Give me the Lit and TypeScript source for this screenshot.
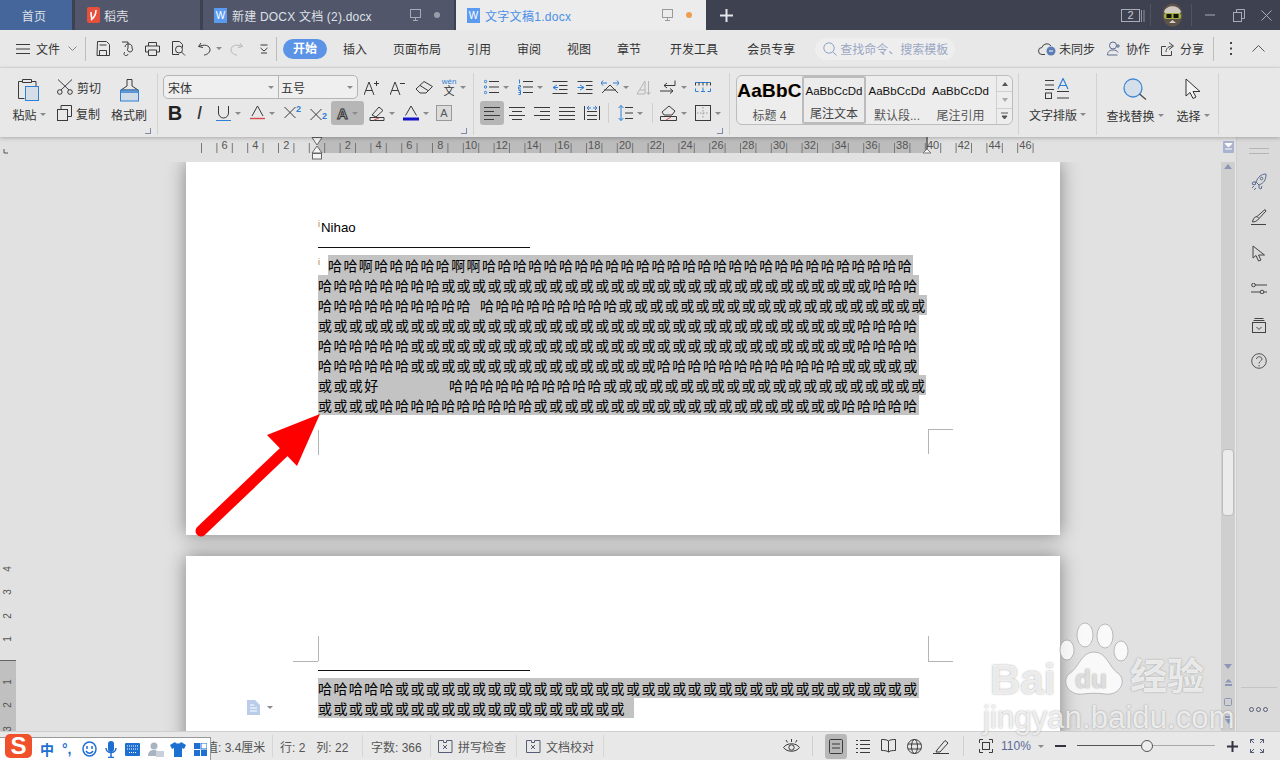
import { LitElement, html, svg, css } from "lit";
import { customElement } from "lit/decorators.js";

const I = (w: number, h: number, b: unknown, sw = 1) => html`<svg class="i" width=${w} height=${h} viewBox="0 0 ${w} ${h}" fill="none" stroke="#3a3a3a" stroke-width=${sw}>${b}</svg>`;
const BL = "#2f7fd6";
const caret = html`<i class="c"></i>`;
const T = (w: number, icon: unknown, c = false, on = false) => html`<span class="t ${on ? "on" : ""}" style="width:${w}px">${icon}${c ? caret : ""}</span>`;
const r = (s: string, n: number) => s.repeat(n);
const H = "哈", O = "或";

type Seg = string | number;
type Line = { indent?: number; segs: Seg[] };
const lines: Line[] = [
  { indent: 10, segs: ["哈哈啊哈哈哈哈哈啊啊" + r(H, 28)] },
  { segs: [r(H, 8) + r(O, 28) + r(H, 3)] },
  { segs: [r(H, 10), 8, r(H, 9) + r(O, 20)] },
  { segs: [r(O, 35) + r(H, 4)] },
  { segs: [r(H, 6) + r(O, 29) + r(H, 4)] },
  { segs: [r(H, 6) + r(O, 16) + r(H, 12) + r(O, 5)] },
  { segs: ["或或或好", 69.4, r(H, 10) + r(O, 21)] },
  { segs: [r(O, 4) + r(H, 10) + r(O, 20) + r(H, 5)] },
];
const lines2: Line[] = [{ segs: [r(H, 5) + r(O, 34)] }, { segs: [r(O, 20), 8] }];
const renderLine = (l: Line) => html`<div class="ln" style=${l.indent ? `padding-left:${l.indent}px` : ""}><span class="hl">${l.segs.map((s) => typeof s === "number" ? html`<span class="gap" style="width:${s}px"></span>` : s)}</span></div>`;

const hr = () => {
  const items: unknown[] = [];
  for (let n = -7.5; n <= 46.5; n += 1) {
    const x = 317 + 15.4 * n;
    items.push(svg`<line x1=${x} x2=${x} y1="6" y2="16" stroke="#777" stroke-width="1"/>`);
  }
  for (let n = -6; n <= 46; n += 2) {
    if (n === 0) continue;
    items.push(svg`<text x=${317 + 15.4 * n} y="12" text-anchor="middle" class="rt">${Math.abs(n)}</text>`);
  }
  return items;
};

const tabW = html`<span class="w">W</span>`;
const mon = html`<svg class="i" width="13" height="14" viewBox="0 0 13 14" fill="none" stroke="currentColor"><rect x="1.5" y="1.5" width="10" height="8"/><path d="M6.5 9.5v3M4 12.5h5"/></svg>`;

@customElement("app-root")
export class AppRoot extends LitElement {
  static styles = css`
    :host { display: block; width: 1280px; height: 760px; position: relative; overflow: hidden; font: 12px "Liberation Sans", "Noto Sans CJK SC", sans-serif; color: #333; background: #e1e1e1; }
    .root { display: flex; flex-direction: column; height: 760px; }
    .i { display: block; flex: none; }
    .title { height: 30px; background: #3d4150; display: flex; flex: none; color: #dfe1e8; }
    .tab { display: flex; align-items: center; background: #51566a; height: 30px; flex: none; box-sizing: border-box; font-size: 12px; letter-spacing: .2px; }
    .tab.home { width: 72px; background: #44669b; justify-content: center; margin-right: 3px; padding-right: 4px; }
    .tab.dk { width: 125px; margin-right: 3px; padding-left: 12px; gap: 4px; }
    .tab.doc { width: 251px; margin-right: 2px; padding-left: 11px; gap: 5px; }
    .tab.act { width: 250px; background: #ececec; color: #4a8fe7; padding-left: 11px; gap: 5px; letter-spacing: .3px; }
    .w { width: 13px; height: 15px; background: #5b9bef; color: #fff; font-size: 10px; display: flex; align-items: center; justify-content: center; flex: none; }
    .tend { margin-left: auto; display: flex; align-items: center; gap: 12px; color: #a7abb7; padding-right: 14px; }
    .tab.act .tend { color: #9a9a9a; }
    .dot { width: 6px; height: 6px; border-radius: 50%; background: #9a9da8; }
    .dot.o { background: #ee9d4e; }
    .plus { width: 40px; display: flex; justify-content: center; align-items: center; }
    .win { margin-left: auto; display: flex; align-items: center; height: 30px; }
    .num { width: 17px; height: 11px; border: 1px solid #a9adb8; color: #c9ccd4; font-size: 11px; line-height: 11px; text-align: center; }
    .vs { width: 1px; height: 22px; background: #50545f; }
    .w-bars { margin: 0 5px 0 1px; }
    .w-ava { margin: 0 7px 0 10px; }
    .w-min { margin: 0 12px 0 13px; }
    .w-max { margin: 0 13px 0 6px; }
    .w-cls { margin: 0 8px 0 3px; }
    .menu { height: 38px; flex: none; background: #e8e8e8; display: flex; align-items: center; border-bottom: 1px solid #dcdcdc; box-sizing: border-box; }
    .mbtn { display: flex; align-items: center; justify-content: center; flex: none; }
    .msep { width: 1px; height: 24px; background: #bdbdbd; flex: none; }
    .mfile { margin-left: 6px; }
    .pill { width: 44px; height: 20px; border-radius: 10px; background: #5b94e6; color: #fff; font-weight: 700; text-align: center; line-height: 20px; margin-left: 6px; margin-right: 16px; flex: none; }
    .tabs { display: flex; gap: 26px; }
    .tabs.b { gap: 29px; margin-left: 29px; }
    .search { width: 140px; height: 22px; border-radius: 11px; background: #eeeeee; margin-left: 20px; display: flex; align-items: center; gap: 3px; padding-left: 8px; box-sizing: border-box; color: #9aa6c4; flex: none; }
    .mr { margin-left: auto; display: flex; align-items: center; height: 38px; }
    .act2 { display: flex; align-items: center; gap: 3px; color: #333; }
    .act2.co { margin-left: 12px; gap: 5px; }
    .act2.sh { margin-left: 11px; gap: 6px; }
    .mr .msep { margin-left: 9px; }
    .m-dots { margin-left: 16px; }
    .m-up { margin: 0 15px 0 20px; }
    .ribbon { height: 69px; flex: none; background: #e8e8e8; display: flex; position: relative; z-index: 2; box-shadow: 0 1px 4px rgba(0,0,0,.25); }
    .g { position: relative; box-sizing: border-box; height: 62px; margin-top: 5px; flex: none; border-right: 1px solid #d2d2d2; }
    .launch { position: absolute; right: 6px; bottom: 1px; width: 5px; height: 5px; border-right: 1px solid #7f8aa8; border-bottom: 1px solid #7f8aa8; }
    .clip { width: 158px; display: flex; padding-left: 13px; }
    .big { display: flex; flex-direction: column; align-items: center; flex: none; }
    .big > svg { margin-top: 5px; }
    .big .lb { display: flex; align-items: center; height: 18px; margin-top: 3px; white-space: nowrap; }
    .lb .c { margin-left: 3px; }
    .big.pa { width: 32px; }
    .big.br { width: 36px; }
    .small { width: 54px; display: flex; flex-direction: column; gap: 10px; margin-left: 12px; padding-top: 6px; flex: none; }
    .small div { display: flex; align-items: center; gap: 4px; height: 16px; }
    .rows { display: flex; flex-direction: column; gap: 2px; padding-top: 2px; }
    .row { display: flex; height: 24px; align-items: center; }
    .font { width: 316px; padding-left: 5px; }
    .para { width: 256px; padding-left: 6px; }
    .t { display: flex; align-items: center; justify-content: center; gap: 4px; height: 24px; flex: none; border-radius: 3px; box-sizing: border-box; }
    .t.on { background: #b6b6b6; }
    .c { display: inline-block; width: 0; height: 0; border-left: 3px solid transparent; border-right: 3px solid transparent; border-top: 3px solid #8a8a8a; flex: none; }
    .combo { width: 195px; height: 24px; border: 1px solid #b4b4b4; border-radius: 5px; display: flex; box-sizing: border-box; background: #efefef; flex: none; }
    .combo span { display: flex; align-items: center; justify-content: space-between; padding: 0 4px; box-sizing: border-box; }
    .combo span:first-child { width: 115px; border-right: 1px solid #b4b4b4; }
    .combo span:last-child { flex: 1; padding-left: 2px; }
    .wen { font-size: 8px; line-height: 8px; color: ${css([BL] as unknown as TemplateStringsArray)}; text-align: center; display: block; }
    .wen span { font-size: 11px; color: #333; line-height: 10px; }
    .bb { font: 700 20px "Liberation Sans", sans-serif; color: #222; }
    .ii { font: italic 19px "Liberation Sans", sans-serif; color: #333; }
    .sx { display: flex; align-items: flex-start; gap: 0; height: 16px; }
    .sx.sub { align-items: flex-end; }
    .sx em { font: 700 9px/9px "Liberation Sans", sans-serif; color: #2f7fd6; font-style: normal; }
    .aa { font: 700 15px "Liberation Sans", sans-serif; color: #b6b6b6; -webkit-text-stroke: 1px #333; }
    .ab { width: 14px; height: 14px; border: 1px solid #999; background: #dcdcdc; font-size: 11px; line-height: 14px; text-align: center; color: #555; }
    .vsep { width: 1px; height: 20px; background: #cfcfcf; flex: none; }
    .gal { width: 289px; padding-left: 6px; }
    .gallery { width: 277px; height: 50px; margin-top: 2px; border: 1px solid #bdbdbd; border-radius: 6px; display: flex; background: #ededed; box-sizing: border-box; }
    .st { display: flex; flex-direction: column; align-items: center; justify-content: space-between; padding: 4px 0 1px; box-sizing: border-box; color: #555; flex: none; white-space: nowrap; overflow: hidden; }
    .st.sel { border: 2px solid #bcbcbc; border-radius: 2px; background: #ececec; color: #444; padding-top: 2px; }
    .st b { font: 400 11.5px "Liberation Sans", sans-serif; color: #111; height: 22px; line-height: 22px; }
    .st b.h { font-weight: 700; font-size: 19px; color: #000; letter-spacing: .2px; text-shadow: -1px 0 0 rgba(240,160,60,.35); }
    .gs { margin-left: auto; width: 15px; display: flex; flex-direction: column; border-left: 1px solid #cfcfcf; }
    .gs span { flex: 1; display: flex; align-items: center; justify-content: center; border-bottom: 1px solid #d0d0d0; }
    .gs span:last-child { border: 0; }
    .ca { width: 0; height: 0; border-left: 3px solid transparent; border-right: 3px solid transparent; }
    .ca.u { border-bottom: 4px solid #555; }
    .ca.d { border-top: 4px solid #aaa; }
    .layout { width: 78px; display: flex; justify-content: center; }
    .findg { width: 122px; display: flex; padding-left: 10px; gap: 14px; }
    .big.top > svg { margin-top: 5px; }
    .big.top .lb { margin-top: 6px; }
    .big.fd { width: 56px; }
    .big.se { width: 32px; }
    .work { flex: 1; display: flex; min-height: 0; }
    .left { width: 1236px; display: flex; flex-direction: column; flex: none; }
    .ruler { height: 25px; background: #e1e1e1; flex: none; display: block; }
    .rt { font: 11px "Liberation Sans", sans-serif; fill: #555; }
    .rt.v { font-size: 10px; }
    .mid { flex: 1; display: flex; min-height: 0; }
    .vr { width: 16px; flex: none; display: block; }
    .canvas { width: 1205px; flex: none; overflow: hidden; background: #e1e1e1; display: flex; flex-direction: column; gap: 21px; padding-left: 170px; box-sizing: border-box; }
    .page { width: 874px; background: #fff; box-shadow: 0 0 18px rgba(0,0,0,.42); flex: none; position: relative; box-sizing: border-box; padding-left: 132px; color: #000; }
    .p1 { height: 373px; padding-top: 57px; }
    .p2 { height: 300px; padding-top: 114px; }
    .nihao { font: 13.3px/18px "Liberation Sans", sans-serif; height: 18px; padding-left: 3px; position: relative; }
    .hline { width: 212px; height: 1px; background: #111; }
    .p1 .hline { margin-top: 10px; }
    .tx { margin-top: 7px; position: relative; }
    .ln { height: 20px; font: 14px/20px "Noto Sans CJK SC", sans-serif; letter-spacing: 1.4px; white-space: nowrap; position: relative; color: #000; }
    .hl { background: #c3c3c3; display: inline-block; height: 20px; }
    .gap { display: inline-block; height: 1px; }
    .cm { position: absolute; background: #b4b4b4; }
    .cm.v { width: 1px; height: 25px; }
    .cm.h { width: 25px; height: 1px; }
    .a1 { left: 132px; top: 268px; }
    .a2 { left: 742px; top: 267px; height: 26px; }
    .a3 { left: 742px; top: 267px; }
    .b1 { left: 132px; top: 80px; }
    .b2 { left: 107px; top: 105px; }
    .b3 { left: 742px; top: 80px; }
    .b4 { left: 742px; top: 105px; }
    .imark { position: absolute; left: 0; top: 0; font: 9px/10px "Liberation Sans", sans-serif; color: #b07a3a; letter-spacing: 0; }
    .tx .imark { top: 2px; z-index: 1; }
    .sb { width: 15px; flex: none; background: #cfcfcf; border-right: 1px solid #eaeaea; box-sizing: border-box; display: flex; flex-direction: column; align-items: center; position: relative; }
    .thumb { position: absolute; left: 1px; top: 287px; width: 12px; height: 67px; border-radius: 4px; background: #ebebeb; border: 1px solid #bdbdbd; box-sizing: border-box; }
    .sbb { margin-top: auto; display: flex; flex-direction: column; align-items: center; gap: 10px; padding-bottom: 6px; }
    .tri { width: 0; height: 0; border-left: 4px solid transparent; border-right: 4px solid transparent; }
    .tri.u { border-bottom: 5px solid #8d96b5; margin-top: 2px; }
    .tri.d { border-top: 5px solid #8d96b5; }
    .side { flex: 1; background: #dadada; display: flex; flex-direction: column; align-items: center; border-left: 1px solid #cfcfcf; box-sizing: border-box; position: relative; }
    .grip { width: 20px; height: 4px; border-top: 1px solid #b5b5b5; border-bottom: 1px solid #b5b5b5; margin-top: 11px; margin-bottom: 19px; flex: none; }
    .sicons { display: flex; flex-direction: column; align-items: center; }
    .sicons svg:nth-child(2) { margin-top: 18px; }
    .sicons svg:nth-child(3) { margin-top: 20px; }
    .sicons svg:nth-child(4) { margin-top: 21px; }
    .sicons svg:nth-child(5) { margin-top: 24px; }
    .sicons svg:nth-child(6) { margin-top: 20px; }
    .sfoot { margin-top: auto; width: 36px; height: 43px; border-top: 1px solid #c4c4c4; display: flex; justify-content: center; align-items: center; gap: 2px; }
    .ring { width: 3px; height: 3px; border: 1px solid #555c75; border-radius: 50%; }
    .status { height: 29px; flex: none; background: #e8e8e8; display: flex; align-items: center; border-top: 1px solid #cfcfcf; box-sizing: border-box; color: #555; position: relative; }
    .sc { display: flex; align-items: center; height: 22px; flex: none; box-sizing: border-box; border-right: 1px solid #d6d6d6; gap: 5px; white-space: nowrap; }
    .sc.s1 { width: 273px; padding-left: 206px; }
    .sc.s2 { width: 90px; padding-left: 7px; gap: 11px; }
    .sc.s3 { width: 68px; padding-left: 8px; }
    .sc.s4 { width: 86px; padding-left: 7px; }
    .sc.s5 { width: 87px; padding-left: 9px; }
    .sr { display: flex; align-items: center; margin-left: auto; height: 28px; }
    .sp { flex: none; }
    .zoomv { margin-left: 8px; color: #5a6a9a; width: 32px; flex: none; }
    .sview { width: 22px; height: 25px; background: #b8b8b8; border-radius: 3px; display: flex; align-items: center; justify-content: center; flex: none; }
    .slider { position: relative; width: 138px; height: 14px; flex: none; }
    .slider::before { content: ""; position: absolute; left: 0; right: 0; top: 6px; height: 1px; background: #aaa; }
    .slider::after { content: ""; position: absolute; left: 64px; top: 1px; width: 10px; height: 10px; border: 1px solid #555; border-radius: 50%; background: #eee; }
    .fill { position: absolute; left: 0; top: 6px; height: 1px; width: 64px; background: #555; }
    .arrow { position: absolute; left: 0; top: 0; pointer-events: none; z-index: 5; }
    .wm { position: absolute; left: 983px; top: 620px; width: 230px; height: 112px; pointer-events: none; z-index: 4; color: rgba(255,255,255,.78); text-shadow: 0 0 2px rgba(110,110,110,.65); }
    .wm span { position: absolute; white-space: nowrap; }
    .wm .bai { left: 7px; top: 39px; font: 700 42px/1 "Liberation Sans", sans-serif; }
    .wm .jy { left: 147px; top: 36px; font: 700 37px/1 "Noto Sans CJK SC", sans-serif; }
    .wm .url { left: 0; top: 82px; font: 31px/1 "Liberation Sans", sans-serif; letter-spacing: .1px; }
    .wm .du { left: 92px; top: 46px; font: 700 26px/1 "Liberation Sans", sans-serif; color: rgba(225,225,225,.95); }
    .wm svg { position: absolute; left: 76px; top: 2px; }
    .ime { position: absolute; left: 0; top: 737px; width: 211px; height: 23px; background: #fff; border-top: 1px solid #999; border-right: 1px solid #999; box-sizing: border-box; z-index: 6; display: flex; align-items: center; padding-left: 40px; color: #1d6fd1; }
    .ime .zh { font: 700 14px "Noto Sans CJK SC", sans-serif; width: 22px; }
    .slogo { position: absolute; left: 5px; top: -4px; width: 27px; height: 24px; background: #f0502a; border-radius: 5px; color: #fff; font: 900 24px/24px "Liberation Sans", sans-serif; text-align: center; }
    .imec { display: flex; align-items: center; gap: 8px; }
    .punc { font: 700 14px/10px "Liberation Sans", sans-serif; width: 12px; }
    .shirt { margin-left: -2px; }
    .doci { position: absolute; left: 61px; top: 144px; display: flex; align-items: center; gap: 7px; }
  `;

  render() {
    return html`<div class="root">
      ${this.titleBar()}
      ${this.menuBar()}
      ${this.ribbon()}
      <div class="work">
        <div class="left">
          ${this.ruler()}
          <div class="mid">
            ${this.vruler()}
            <div class="canvas">
              <div class="page p1">
                <div class="nihao"><span class="imark">i</span>Nihao</div>
                <div class="hline"></div>
                <div class="tx">
                  <span class="imark">i</span>
                  ${lines.map(renderLine)}
                </div>
                <i class="cm v a1"></i>
                <i class="cm v a2"></i>
                <i class="cm h a3"></i>
              </div>
              <div class="page p2">
                <i class="cm v b1"></i>
                <i class="cm h b2"></i>
                <i class="cm v b3"></i>
                <i class="cm h b4"></i>
                <div class="hline"></div>
                <div class="tx">${lines2.map(renderLine)}</div>
                <div class="doci">
                  <svg class="i" width="13" height="15" viewBox="0 0 13 15"><path d="M0 0h8l5 5v10H0z" fill="#b9cdea"/><path d="M3 5h4M3 8h7M3 11h7" stroke="#fff"/></svg>
                  <i class="c"></i>
                </div>
              </div>
            </div>
            <div class="sb">
              <div class="tri u"></div>
              <div class="thumb"></div>
              <div class="sbb">
                <div class="tri d"></div>
                <svg class="i" width="9" height="9" viewBox="0 0 9 9" fill="#8d96b5"><path d="M4.5 0L8 3.5H1zM1 5h7v2H1z"/></svg>
                <svg class="i" width="8" height="8" viewBox="0 0 8 8" fill="none" stroke="#8d96b5"><rect x=".5" y=".5" width="7" height="7" rx="1"/></svg>
                <svg class="i" width="9" height="9" viewBox="0 0 9 9" fill="#8d96b5"><path d="M1 0h7v2H1zM1 3h7L4.5 8z"/></svg>
              </div>
            </div>
          </div>
        </div>
        ${this.sidebar()}
      </div>
      ${this.statusBar()}
      <svg class="arrow" width="1280" height="760"><path d="M201 531L287 449" stroke="#f00" stroke-width="11" stroke-linecap="round"/><path d="M320 414L267 435L297 466Z" fill="#f00"/></svg>
      ${this.watermark()}
      ${this.ime()}
    </div>`;
  }

  titleBar() {
    return html`<div class="title">
      <div class="tab home">首页</div>
      <div class="tab dk"><svg class="i" width="13" height="16" viewBox="0 0 13 16"><rect width="13" height="16" rx="2" fill="#e9503c"/><path d="M9 3C9 7 8 10 4 13M4 5c0 3 0 5 1 7" stroke="#fff" stroke-width="1.6" fill="none"/></svg>稻壳</div>
      <div class="tab doc">${tabW}新建 DOCX 文档 (2).docx<span class="tend">${mon}<span class="dot"></span></span></div>
      <div class="tab act">${tabW}文字文稿1.docx<span class="tend">${mon}<span class="dot o"></span></span></div>
      <div class="plus"><svg class="i" width="13" height="13" viewBox="0 0 13 13" stroke="#e4e6ec" stroke-width="2"><path d="M6.500 0v13M0 6.500h13"/></svg></div>
      <div class="win">
        <span class="num">2</span>
        <svg class="i w-bars" width="4" height="13" viewBox="0 0 4 13" stroke="#8d919c"><path d="M.5 1v12M3 1v12"/></svg>
        <span class="vs"></span>
        <svg class="i w-ava" width="23" height="24" viewBox="0 0 23 24"><ellipse cx="11.500" cy="12" rx="10" ry="11.500" fill="#5d5348"/><path d="M3 9C5 2 17 1 20 9L18 11H5z" fill="#cfc9c0"/><rect x="3" y="10" width="17" height="6" rx="2.500" fill="#a4b13c"/><rect x="5.500" y="11" width="5" height="4" fill="#111"/><rect x="12.500" y="11" width="5" height="4" fill="#111"/><path d="M8 20l3.500-3 3.500 3z" fill="#d8cfc8"/></svg>
        <span class="vs"></span>
        <svg class="i w-min" width="10" height="2" viewBox="0 0 10 2" stroke="#a9adb8"><path d="M0 1h10"/></svg>
        <svg class="i w-max" width="12" height="13" viewBox="0 0 12 13" fill="none" stroke="#a9adb8"><rect x=".5" y="3.500" width="8" height="9"/><path d="M3.500 3.500v-3h8v9h-3"/></svg>
        <svg class="i w-cls" width="11" height="11" viewBox="0 0 11 11" stroke="#a9adb8"><path d="M.5.5l10 10M10.500.5l-10 10"/></svg>
      </div>
    </div>`;
  }

  menuBar() {
    const m = (w: number, b: unknown = "") => html`<span class="mbtn" style="width:${w}px">${b}</span>`;
    return html`<div class="menu">
      ${m(16)}
      ${I(14, 10, svg`<path d="M0 .5h14M0 5h14M0 9.500h14"/>`)}
      <span class="mfile">文件</span>
      ${m(25, I(9, 5, svg`<path d="M.5.500L4.500 4.500L8.500.500" stroke="#888"/>`))}
      <span class="msep"></span>
      ${m(10)}
      ${I(14, 15, svg`<path d="M1.500.500h9l3 3v11h-12.500zM3.500 14.500v-5h7v5M3.500 4h7"/>`)}
      ${m(11)}
      ${I(14, 15, svg`<path d="M1 1h6M7 1v6a2.500 2.500 0 1 0 4 0a3 3 0 1 0-7-1M4 11a2 2 0 1 0 3 2" />`)}
      ${m(10)}
      ${I(15, 14, svg`<path d="M3.500 4V.500h8V4M.500 4h14v6h-3M3.500 10h-3V4M3.500 8h8v5.500h-8z"/>`)}
      ${m(11)}
      ${I(15, 15, svg`<path d="M8 13.500H1.500V.500h7l3 3v3"/><circle cx="8" cy="8.500" r="3.500"/><path d="M10.500 11L14 14.500"/>`)}
      ${m(12)}
      ${I(13, 14, svg`<path d="M3 1L.500 4.500L5 5.500M1 4.500C6 2 12 3 12 8C12 11 8 13 6 13"/>`)}
      ${m(15, caret)}
      ${m(4)}
      ${I(13, 14, svg`<path stroke="#b8b8b8" d="M10 1l2.500 3.500L8 5.500M12 4.500C7 2 1 3 1 8C1 11 5 13 7 13"/>`)}
      ${m(17)}
      ${I(8, 10, svg`<path d="M.5 1h7M.5 4l3.500 3L7.500 4M1 9h6"/>`)}
      ${m(8)}
      <span class="msep"></span>
      <span class="pill">开始</span>
      <div class="tabs"><span>插入</span><span>页面布局</span><span>引用</span><span>审阅</span><span>视图</span><span>章节</span></div>
      <div class="tabs b"><span>开发工具</span><span>会员专享</span></div>
      <div class="search"><svg class="i" width="14" height="14" viewBox="0 0 14 14" fill="none" stroke="#8ea0c8"><circle cx="6" cy="6" r="5.200"/><path d="M10 10l3.500 3.500"/></svg>查找命令、搜索模板</div>
      <div class="mr">
        <span class="act2"><svg class="i" width="18" height="14" viewBox="0 0 18 14" fill="none" stroke="#444"><path d="M7 12.500H4a3.500 3.500 0 0 1 0-7a5 5 0 0 1 9-1.500"/><circle cx="13" cy="9" r="4.500" fill="#5e7fb5" stroke="none"/><path d="M11 9h4" stroke="#fff"/></svg>未同步</span>
        <span class="act2 co"><svg class="i" width="14" height="15" viewBox="0 0 14 15" fill="none" stroke="#5a6c92"><circle cx="6" cy="4.500" r="3.500"/><path d="M.5 14c0-4 3-5 5.500-5s4 .5 5 2.500M.5 14h10M11 3v4M9 5h4"/></svg>协作</span>
        <span class="act2 sh"><svg class="i" width="13" height="14" viewBox="0 0 13 14" fill="none" stroke="#444"><path d="M5 4.500H.5v9h10V9M8 .5l4.500 3.500L8 7.500M12 4C8 4 5 6 5 10"/></svg>分享</span>
        <span class="msep"></span>
        <svg class="i m-dots" width="2" height="13" viewBox="0 0 2 13" fill="#444"><rect width="2" height="2"/><rect y="5.500" width="2" height="2"/><rect y="11" width="2" height="2"/></svg>
        <svg class="i m-up" width="13" height="7" viewBox="0 0 13 7" fill="none" stroke="#555"><path d="M.5 6.500L6.500.500L12.500 6.500"/></svg>
      </div>
    </div>`;
  }

  ribbon() {
    return html`<div class="ribbon">
      <div class="g clip">
        <div class="big pa">
          <svg class="i" width="22" height="24" viewBox="0 0 22 24" fill="none" stroke="#3a3a3a"><path d="M4.500 3.500H.5v17h6M14 3.500h4V8M4.500 1.500h9v3h-9z"/><rect x="7.500" y="8.500" width="13" height="14" fill="#d5dee8" stroke="${BL}"/></svg>
          <span class="lb">粘贴${caret}</span>
        </div>
        <div class="small">
          <div>${I(16, 16, svg`<path d="M1 .5L12 11M15 .5L4 11"/><circle cx="2.800" cy="13" r="2.300"/><circle cx="13" cy="13" r="2.300"/>`)}剪切</div>
          <div>${I(15, 16, svg`<rect x=".5" y="4.500" width="10" height="11"/><path d="M4 4.500V.5h10.500v11h-4"/>`)}复制</div>
        </div>
        <div class="big br">
          <svg class="i" width="19" height="24" viewBox="0 0 19 24" fill="none" stroke="#3a3a3a"><path d="M7 8V1.500h5V8l6 4H1z"/><rect x=".5" y="14" width="18" height="9" fill="#cfdbe6" stroke="${BL}"/><path d="M.5 12h18v2H.5z" stroke="${BL}"/></svg>
          <span class="lb">格式刷</span>
        </div>
        <i class="launch"></i>
      </div>
      <div class="g font">
        <div class="rows">
          <div class="row">
            <div class="combo"><span>宋体${caret}</span><span>五号${caret}</span></div>
            ${T(28, I(16, 15, svg`<path d="M0 15L5 2l5 13M2 10.500h6M10 3.500h5M12.500 1v5" />`))}
            ${T(24, I(16, 15, svg`<path d="M0 15L5 2l5 13M2 10.500h6M10 3.500h5"/>`))}
            ${T(28, I(19, 14, svg`<path d="M1 9L9 1.500l8.500 5L11 13H5zM5 5.500l8 5"/>`))}
            ${T(32, html`<span class="wen">wén<br /><span>文</span></span>`, true)}
          </div>
          <div class="row">
            ${T(24, html`<span class="bb">B</span>`)}
            ${T(25, html`<span class="ii">I</span>`)}
            ${T(33, I(15, 16, svg`<path d="M2.500 1v7a5 5 0 0 0 10 0V1"/><path d="M0 15.500h15" stroke="${BL}"/>`), true)}
            ${T(34, I(15, 16, svg`<path d="M2 11L7.500 1l5.500 10"/><path d="M0 13.500h15" stroke="#d94a4a" stroke-width="1.400"/>`), true)}
            ${T(27, html`<span class="sx">${I(12, 14, svg`<path d="M.5 2l11 11M11.500 2L.5 13"/>`)}<em>2</em></span>`)}
            ${T(25, html`<span class="sx sub">${I(12, 13, svg`<path d="M.5 1l11 11M11.500 1L.5 12"/>`)}<em>2</em></span>`)}
            ${T(33, html`<span class="aa">A</span>`, true, true)}
            ${T(35, I(16, 16, svg`<path d="M3 10L10 2l4 3.500L7 12zM1 12.500h14v3H1z"/><path d="M5 15l5-2" stroke="#d94a4a"/>`), true)}
            ${T(33, I(16, 16, svg`<path d="M2.500 10.500L8 1l5.500 9.500"/><path d="M0 14h16" stroke="#1414cc" stroke-width="3"/>`), true)}
            ${T(24, html`<span class="ab">A</span>`)}
          </div>
        </div>
        <i class="launch"></i>
      </div>
      <div class="g para">
        <div class="rows">
          <div class="row">
            ${T(33, I(15, 16, svg`<path d="M5 2.500h10M5 8h10M5 13.500h10"/><circle cx="1.500" cy="2.500" r="1.200" stroke="${BL}"/><circle cx="1.500" cy="8" r="1.200" stroke="${BL}"/><circle cx="1.500" cy="13.500" r="1.200" stroke="${BL}"/>`), true)}
            ${T(34, I(15, 16, svg`<path d="M5 2.500h10M5 8h10M5 13.500h10"/><path d="M1.500 .5v4M.5 6.500h2v1.500h-2v2h2.500M.5 11.500h2v4h-2M.5 13.500h2" stroke="${BL}"/>`), true)}
            ${T(25, I(16, 13, svg`<path d="M.5.500h15M7 4.500h8.500M7 8.500h8.500M.5 12.500h15"/><path d="M5 4L1 6.500L5 9M1 6.500h5" stroke="${BL}"/>`))}
            ${T(25, I(16, 13, svg`<path d="M.5.500h15M9 4.500h6.500M9 8.500h6.500M.5 12.500h15"/><path d="M3 4l4 2.500L3 9M7 6.500H.5" stroke="${BL}"/>`))}
            ${T(35, I(18, 14, svg`<path d="M1 13L9 5l8 8M3 10h12"/><path d="M0 3h6M2 .5L0 3l2 2.500M18 3h-6M16 .5L18 3l-2 2.500" stroke="${BL}"/>`), true)}
            ${T(23, I(15, 15, svg`<path stroke="#b4b4b4" d="M9 1v13H1zM4 10h5M12.500 1v13M10.500 12l2 2.500l2-2.500"/>`))}
            ${T(36, I(18, 14, svg`<path d="M16 .5v5H5M8 3L5 5.500L8 8M1 11h13M11 8.500L14 11L11 13.500"/>`), true)}
            ${T(24, I(16, 10, svg`<path d="M.5 .5h15M.5 9.500h3M6 9.500h4M12.500 9.500h3M.5 6.500v3M15.500 6.500v3M8 5.500v4" stroke="${BL}"/><path d="M.5 .5v3M4 .5v3M8 .5v3M12 .5v3M15.500 .5v3"/>`))}
          </div>
          <div class="row">
            ${T(24, I(16, 13, svg`<path d="M0 .5h16M0 4.500h10M0 8.500h16M0 12.500h10"/>`), false, true)}
            ${T(26, I(16, 13, svg`<path d="M0 .5h16M3 4.500h10M0 8.500h16M3 12.500h10"/>`))}
            ${T(24, I(16, 13, svg`<path d="M0 .5h16M6 4.500h10M0 8.500h16M6 12.500h10"/>`))}
            ${T(26, I(16, 13, svg`<path d="M0 .5h16M0 4.500h16M0 8.500h16M0 12.500h16"/>`))}
            ${T(24, I(16, 16, svg`<path d="M.5 1v14M15.500 1v14M3 6.500h10M3 10.500h10M3 14.500h10"/><path d="M3 3h4M5 1L3 3l2 2M13 3H9M11 1l2 2-2 2" stroke="${BL}"/>`))}
            ${T(9, html`<span class="vsep"></span>`)}
            ${T(34, I(15, 16, svg`<path d="M7 2.500h8M7 8h8M7 13.500h8"/><path d="M3 .5v15M.5 3L3 .5L5.500 3M.5 13L3 15.500L5.500 13" stroke="${BL}"/>`), true)}
            ${T(10, html`<span class="vsep"></span>`)}
            ${T(33, I(17, 16, svg`<path d="M2 7L9 1l6 5-3 4H4zM.5 11.500h16v4H.5z"/><path d="M6 15l5-3" stroke="#d94a4a"/>`), true)}
            ${T(35, I(16, 16, svg`<rect x=".5" y=".5" width="15" height="15"/><path stroke-dasharray="1.500 1.500" stroke="#999" d="M8 2v12M2 8h12"/>`), true)}
          </div>
        </div>
        <i class="launch"></i>
      </div>
      <div class="g gal">
        <div class="gallery">
          ${[["AaBbC", "标题 4", 65, "h", ""], ["AaBbCcDd", "尾注文本", 64, "", "sel"], ["AaBbCcDd", "默认段...", 62, "", ""], ["AaBbCcDd", "尾注引用", 65, "", ""]].map(([p, l, w, h, s]) => html`<div class="st ${s}" style="width:${w}px"><b class=${h}>${p}</b><span>${l}</span></div>`)}
          <div class="gs"><span><i class="ca u"></i></span><span><i class="ca d"></i></span><span><svg class="i" width="7" height="8" viewBox="0 0 7 8" stroke="#555" fill="#555"><path d="M0 1h7M1 4h5L3.500 7z"/></svg></span></div>
        </div>
      </div>
      <div class="g layout">
        <div class="big top">
          <svg class="i" width="24" height="21" viewBox="0 0 24 21" fill="none" stroke="#3a3a3a"><path d="M0 2.500h9M0 7h9M0 11.500h9M12 13.500h12M12 20h12"/><rect x=".5" y="15" width="6" height="5.500"/><path d="M13 11L18 .5L23 11M15 7.500h6" stroke="${BL}" stroke-width="1.200"/></svg>
          <span class="lb">文字排版${caret}</span>
        </div>
      </div>
      <div class="g findg">
        <div class="big top fd">
          <svg class="i" width="25" height="22" viewBox="0 0 25 22" fill="none"><circle cx="10" cy="10" r="9" fill="#d5dfea" stroke="#3f8ad9" stroke-width="1.300"/><path d="M16.500 16L23 21.500" stroke="#444" stroke-width="1.200"/></svg>
          <span class="lb">查找替换${caret}</span>
        </div>
        <div class="big top se">
          <svg class="i" width="16" height="22" viewBox="0 0 16 22" fill="#f3f3f3" stroke="#333"><path d="M1 1v17l4-3.500l3 6l3-1.500l-3-5.500h7z"/></svg>
          <span class="lb">选择${caret}</span>
        </div>
      </div>
    </div>`;
  }

  ruler() {
    return html`<svg class="ruler" width="1236" height="25" viewBox="0 0 1236 25">
      <rect x="318" y="0" width="610" height="16" fill="#bcbcbc"/>
      <path d="M4 12v4h4" stroke="#555" fill="none"/>
      ${hr()}
      <path d="M312 .5h10L317 8zM312 16l5-7l5 7z" fill="#f5f5f5" stroke="#666"/>
      <rect x="312.500" y="16.500" width="9" height="5.500" fill="#f5f5f5" stroke="#666"/>
      <path d="M927 0v13" stroke="#333"/>
      <path d="M923 16l4-4l4 4z" fill="#f5f5f5" stroke="#777"/>
      <rect x="1223" y="4" width="11" height="12" rx="1" fill="#a9b3d0"/>
      <path d="M1225 6.500h7l-3.500 3.500zM1225 12h7" stroke="#fff" fill="#fff"/>
    </svg>`;
  }

  vruler() {
    const ys: [number, string][] = [[569 - 162, "4"], [592 - 162, "3"], [616 - 162, "2"], [639 - 162, "1"], [682 - 162, "1"], [705 - 162, "2"], [729 - 162, "3"]];
    return html`<svg class="vr" width="16" height="569" viewBox="0 0 16 569">
      <rect y="498" width="16" height="71" fill="#c0c0c0"/><path d="M0 498.500h16" stroke="#666"/>
      ${ys.map(([y, t]) => svg`<text transform="translate(11 ${y}) rotate(-90)" text-anchor="middle" class="rt v">${t}</text>`)}
    </svg>`;
  }

  sidebar() {
    return html`<div class="side">
      <div class="grip"></div>
      <div class="sicons">
        <svg class="i" width="16" height="18" viewBox="0 0 16 18" fill="none" stroke="#5a6c92"><path d="M15 1c-5 0-8 3-10 8l3 3c5-2 7-5 7-11zM5 9H2L1 11l3 1zM8 12v3l2 1 1-3"/><circle cx="10.500" cy="5.500" r="1.300"/><path d="M3 13l-2 2M5 15l-2 2"/></svg>
        <svg class="i" width="16" height="16" viewBox="0 0 16 16" fill="none" stroke="#444"><path d="M14 .5L6 7.500l2 2L15 2zM6 7.500C3 8 2 10 1.500 13c2 0 5-1 6.500-3.500M0 15.500h15"/></svg>
        <svg class="i" width="14" height="17" viewBox="0 0 14 17" fill="none" stroke="#444"><path d="M1 1v12l3-2.500l2.500 5.500l2.500-1l-2.500-5h6z"/></svg>
        <svg class="i" width="16" height="11" viewBox="0 0 16 11" fill="none" stroke="#444"><path d="M4 2h12M0 9h9M13 9h3"/><circle cx="2.500" cy="2" r="1.800"/><circle cx="11" cy="9" r="1.800"/></svg>
        <svg class="i" width="14" height="15" viewBox="0 0 14 15" fill="none" stroke="#444"><path d="M2.500.5h9M1.500 2.500h11"/><rect x=".5" y="4.500" width="13" height="10"/><path d="M4.500 9l2.500 2.500L9.500 9"/></svg>
        <svg class="i" width="16" height="16" viewBox="0 0 16 16" fill="none" stroke="#555"><circle cx="8" cy="8" r="7.300"/><path d="M5.500 6C5.500 3 11 3 11 6c0 2-3 2-3 4.500M8 12v1.500"/></svg>
      </div>
      <div class="sfoot"><i class="ring"></i><i class="ring"></i><i class="ring"></i></div>
    </div>`;
  }

  statusBar() {
    const sp = (w: number) => html`<span class="sp" style="width:${w}px"></span>`;
    const bk = I(15, 15, svg`<path d="M.5 1.500h5v2h3v-2h5.500v12H.5zM5 6l4 4M9 6l-4 4" stroke="#555c75"/>`);
    return html`<div class="status">
      <span class="sc s1">值: 3.4厘米</span>
      <span class="sc s2">行: 2<span>列: 22</span></span>
      <span class="sc s3">字数: 366</span>
      <span class="sc s4">${bk}拼写检查</span>
      <span class="sc s5">${bk}文档校对</span>
      <div class="sr">
        ${I(17, 14, svg`<path d="M.5 8.500C4 3.500 13 3.500 16.500 8.500C13 13.500 4 13.500 .5 8.500z"/><circle cx="8.500" cy="8.500" r="2.700"/><path d="M8.500 0v3M3 1l1.500 2.500M14 1l-1.500 2.500"/>`)}
        ${sp(12)}<span class="vsep"></span>${sp(12)}
        <span class="sview">${I(14, 15, svg`<rect x=".5" y=".5" width="13" height="14" rx="1"/><path d="M3 5h8M3 9h8"/>`)}</span>
        ${sp(9)}
        ${I(14, 13, svg`<path d="M0 .5h2M4 .5h10M0 4.500h2M4 4.500h10M0 8.500h2M4 8.500h10M0 12.500h2M4 12.500h10"/>`)}
        ${sp(11)}
        ${I(15, 14, svg`<path d="M7.500 2C6 .5 2 .5.500.5v11c2 0 5.500 0 7 1.500c1.500-1.500 5-1.500 7-1.500V.5c-2 0-5.500 0-7 1.500zv11"/>`)}
        ${sp(11)}
        ${I(15, 15, svg`<circle cx="7.500" cy="7.500" r="7"/><ellipse cx="7.500" cy="7.500" rx="3" ry="7"/><path d="M1 5h13M1 10h13"/>`)}
        ${sp(11)}
        ${I(16, 15, svg`<path d="M4 11L12 1.500l3 2.500L7 13H3zM0 14.500h16"/>`)}
        ${sp(14)}<span class="vsep"></span>${sp(15)}
        ${I(14, 14, svg`<path d="M.5 4V.5H4M10 .5h3.500V4M13.500 10v3.500H10M4 13.500H.5V10"/><rect x="3.500" y="3.500" width="7" height="7"/>`)}
        <span class="zoomv">110%</span>
        ${sp(5)}${caret}${sp(11)}
        ${I(11, 2, svg`<path d="M0 1h11" stroke="#334" stroke-width="2"/>`)}
        ${sp(11)}
        <span class="slider"><i class="fill"></i></span>
        ${sp(12)}
        ${I(11, 11, svg`<path d="M0 5.500h11M5.500 0v11" stroke="#334" stroke-width="2"/>`)}
        ${sp(12)}
        ${I(14, 14, svg`<path d="M.5 4V.5H4M10 .5h3.500V4M13.500 10v3.500H10M4 13.500H.5V10M.5.500l3.500 3.500M13.500.500L10 4M13.500 13.500L10 10M.5 13.500L4 10" stroke="#555c75"/>`)}
        ${sp(16)}
      </div>
    </div>`;
  }

  watermark() {
    return html`<div class="wm">
      <svg width="70" height="75" viewBox="0 0 70 75" fill="rgba(255,255,255,.78)" stroke="rgba(150,150,150,.6)"><ellipse cx="8" cy="28" rx="7" ry="10"/><ellipse cx="26" cy="13" rx="8" ry="12"/><ellipse cx="46" cy="14" rx="8" ry="12"/><ellipse cx="62" cy="29" rx="7" ry="10"/><path d="M35 30C48 30 50 46 60 52C68 60 60 74 46 72C40 71 30 71 24 72C10 74 2 60 10 52C20 46 22 30 35 30z"/></svg>
      <span class="bai">Bai</span><span class="du">du</span><span class="jy">经验</span><span class="url">jingyan.baidu.com</span>
    </div>`;
  }

  ime() {
    return html`<div class="ime">
      <span class="slogo">S</span>
      <span class="zh">中</span>
      <div class="imec">
        <span class="punc">°,</span>
        <svg class="i" width="15" height="16" viewBox="0 0 15 16" fill="none" stroke="#1d6fd1" stroke-width="1.500"><ellipse cx="7.500" cy="8" rx="6.500" ry="7"/><path d="M5 5v3M10 5v3M4 10c2 3 5 3 7 0"/></svg>
        <svg class="i" width="12" height="17" viewBox="0 0 12 17" fill="#1d6fd1"><rect x="3" width="6" height="11" rx="3"/><path d="M1 7c0 6 10 6 10 0M6 12v4M3 16.500h6" fill="none" stroke="#1d6fd1" stroke-width="1.500"/></svg>
        <svg class="i" width="15" height="13" viewBox="0 0 15 13"><rect width="15" height="13" rx="1" fill="#1d6fd1"/><path d="M2 3h11M2 6h11M4 9.500h7" stroke="#fff" stroke-dasharray="1 1"/></svg>
        <svg class="i" width="16" height="15" viewBox="0 0 16 15" fill="#a9b4c2"><circle cx="6" cy="4" r="3.500"/><path d="M0 14c0-5 3-6 6-6s4 1 4 3v3z"/><rect x="8" y="9" width="8" height="6" fill="#c8d0da"/></svg>
        <svg class="i shirt" width="16" height="15" viewBox="0 0 16 15" fill="#1d6fd1"><path d="M5 0L0 3l2 4 2-1v9h8V6l2 1 2-4-5-3c-1 2-5 2-6 0z"/></svg>
        <svg class="i" width="13" height="13" viewBox="0 0 13 13" fill="#1d6fd1"><rect width="6" height="6"/><rect x="7" width="6" height="6" fill="none" stroke="#1d6fd1"/><rect y="7" width="6" height="6"/><rect x="7" y="7" width="6" height="6"/></svg>
      </div>
    </div>`;
  }
}
